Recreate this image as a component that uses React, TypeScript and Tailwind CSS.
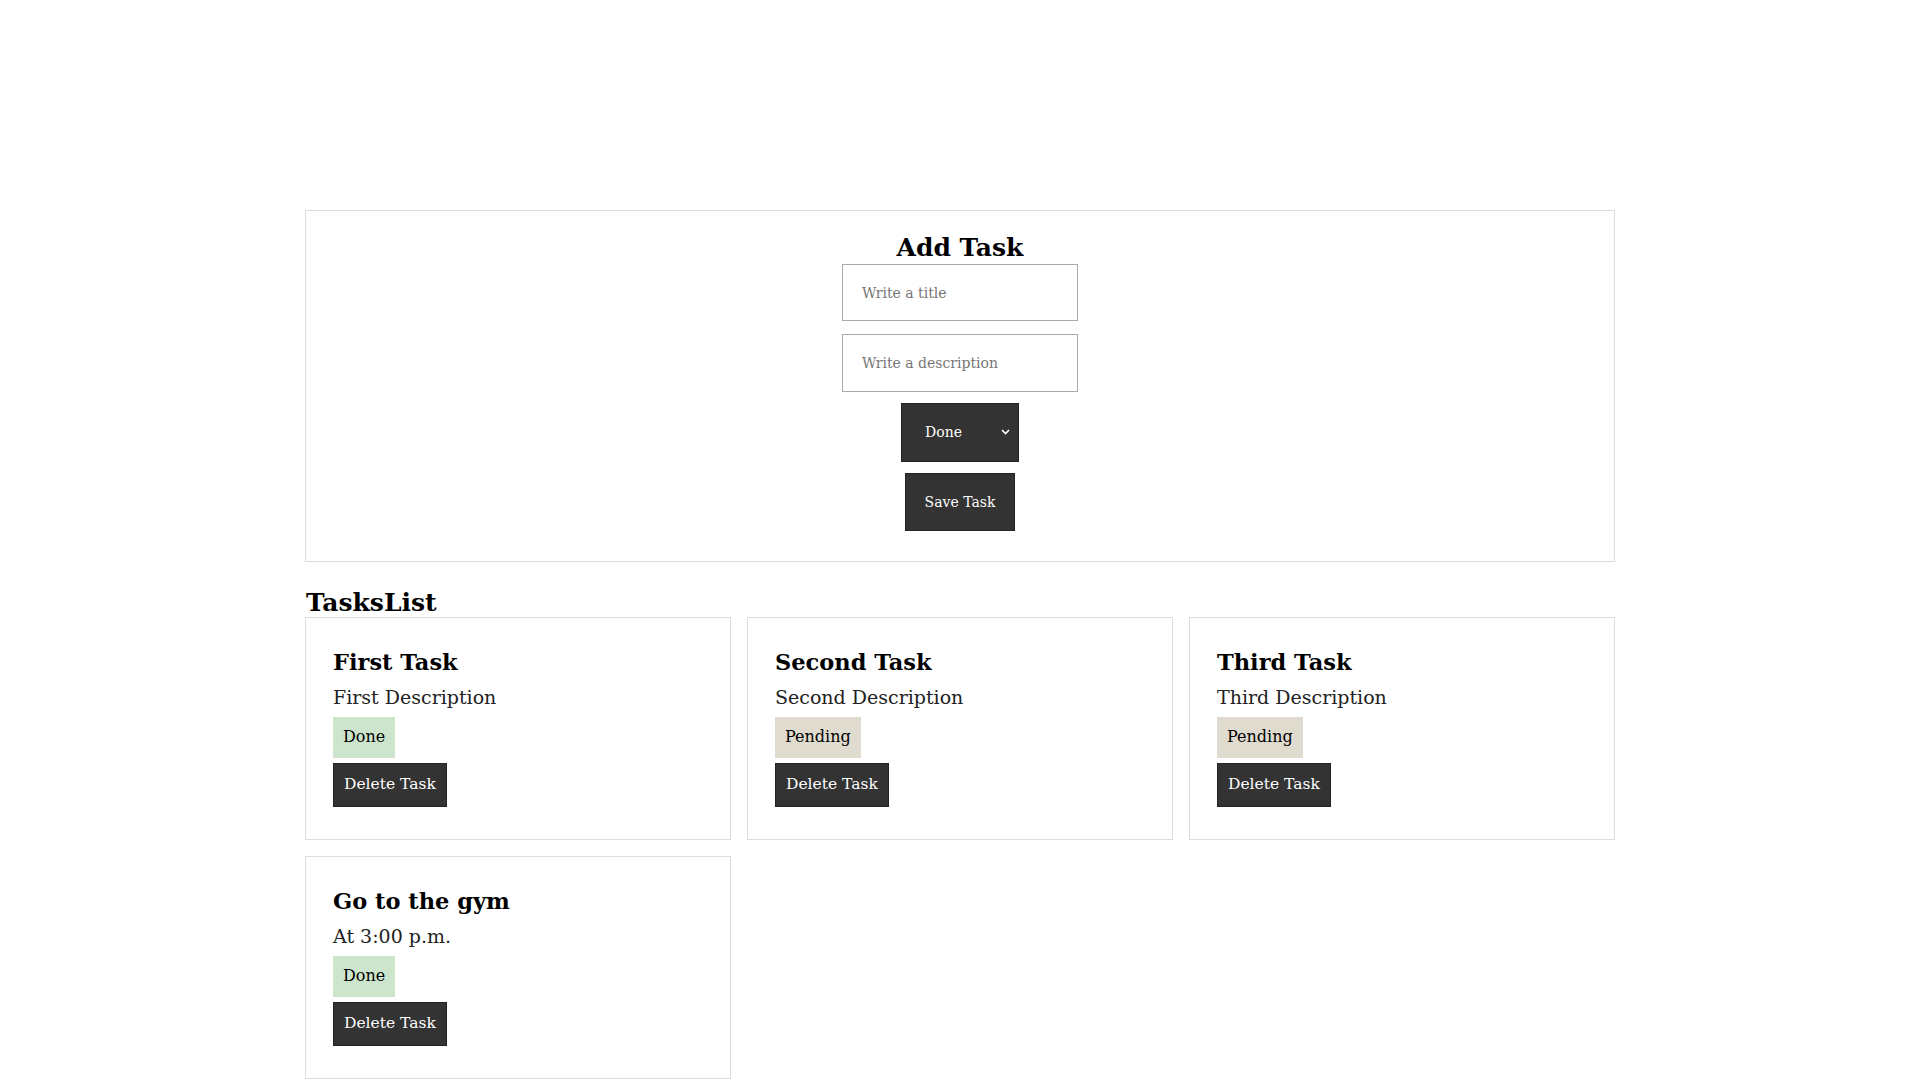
import { useState } from 'react'

type Task = {
  id: number
  title: string
  description: string
  status: 'Done' | 'Pending'
}

const initialTasks: Task[] = [
  { id: 1, title: 'First Task', description: 'First Description', status: 'Done' },
  { id: 2, title: 'Second Task', description: 'Second Description', status: 'Pending' },
  { id: 3, title: 'Third Task', description: 'Third Description', status: 'Pending' },
  { id: 4, title: 'Go to the gym', description: 'At 3:00 p.m.', status: 'Done' },
]

function AddTask({ onSave }: { onSave: (t: Omit<Task, 'id'>) => void }) {
  const [title, setTitle] = useState('')
  const [description, setDescription] = useState('')
  const [status, setStatus] = useState<'Done' | 'Pending'>('Done')

  return (
    <section className="h-[352px] border border-[#ddd] flex flex-col items-center">
      <h1 className="mt-[24px] text-[25px] leading-none font-bold text-black">Add Task</h1>
      <input
        className="mt-[4px] w-[236px] h-[57px] border border-[#aaa] pl-[19px] text-[14px] text-[#222] placeholder:text-[#767676] outline-none"
        placeholder="Write a title"
        value={title}
        onChange={(e) => setTitle(e.target.value)}
      />
      <input
        className="mt-[13px] w-[236px] h-[58px] border border-[#aaa] pl-[19px] text-[14px] text-[#222] placeholder:text-[#767676] outline-none"
        placeholder="Write a description"
        value={description}
        onChange={(e) => setDescription(e.target.value)}
      />
      <div className="relative mt-[11px] w-[118px] h-[59px]">
        <select
          className="appearance-none w-full h-full bg-[#333] border border-[#222] text-white text-[14px] pl-[23px] outline-none"
          value={status}
          onChange={(e) => setStatus(e.target.value as 'Done' | 'Pending')}
        >
          <option value="Done">Done</option>
          <option value="Pending">Pending</option>
        </select>
        {/* chevron for the native select */}
        <svg
          className="pointer-events-none absolute right-[9px] top-[26px]"
          width="9"
          height="6"
          viewBox="0 0 9 6"
          fill="none"
          stroke="white"
          strokeWidth="1.6"
        >
          <path d="M1 1l3.5 3.5L8 1" />
        </svg>
      </div>
      <button
        className="mt-[11px] w-[110px] h-[58px] bg-[#333] border border-[#222] text-white text-[14px]"
        onClick={() => {
          if (!title) return
          onSave({ title, description, status })
          setTitle('')
          setDescription('')
        }}
      >
        Save Task
      </button>
    </section>
  )
}

function TaskCard({ task, onDelete }: { task: Task; onDelete: () => void }) {
  const badge = task.status === 'Done' ? 'bg-[#cce5cc]' : 'bg-[#e0dbcf]'
  return (
    <article className="h-[223px] border border-[#ddd] pl-[27px] pt-[33px]">
      <h2 className="text-[22.5px] leading-none font-bold text-black">{task.title}</h2>
      <p className="mt-[14px] text-[19px] leading-none text-[#222]">{task.description}</p>
      <span className={`mt-[10px] inline-flex items-center h-[41px] px-[10px] text-[16px] text-black ${badge}`}>
        {task.status}
      </span>
      <div>
        <button
          className="mt-[5px] h-[44px] px-[10px] bg-[#333] border border-[#222] text-white text-[15.5px]"
          onClick={onDelete}
        >
          Delete Task
        </button>
      </div>
    </article>
  )
}

export default function App() {
  const [tasks, setTasks] = useState<Task[]>(initialTasks)

  return (
    <div className="min-h-screen bg-white font-[family-name:'DejaVu_Serif',serif]">
      <main className="w-[1310px] mx-auto pt-[210px]">
        <AddTask onSave={(t) => setTasks([...tasks, { ...t, id: Date.now() }])} />
        <h2 className="mt-[28px] ml-[1px] text-[25px] leading-none font-bold text-black">TasksList</h2>
        <div className="mt-[2px] grid grid-cols-3 gap-[16px]">
          {tasks.map((task) => (
            <TaskCard key={task.id} task={task} onDelete={() => setTasks(tasks.filter((t) => t.id !== task.id))} />
          ))}
        </div>
      </main>
    </div>
  )
}
